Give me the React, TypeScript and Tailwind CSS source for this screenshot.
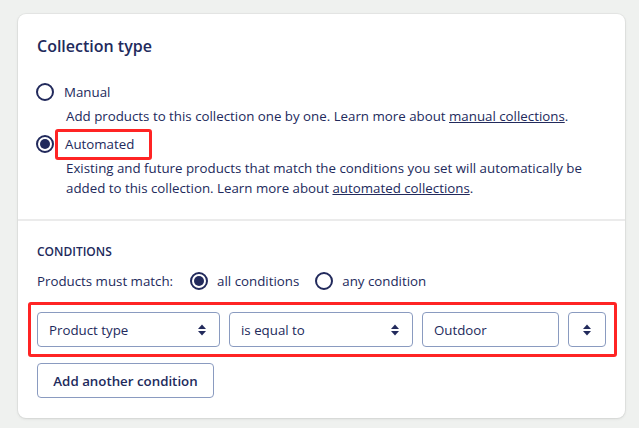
import React from "react";

const ink = "text-[#222a5c]";

// Radio button circle, filled when checked
const Radio = ({ checked }: { checked?: boolean }) => (
  <span className="w-[18px] h-[18px] rounded-full border-2 border-[#222a5c] bg-white flex items-center justify-center shrink-0">
    {checked && <span className="w-[10px] h-[10px] rounded-full bg-[#222a5c]" />}
  </span>
);

// Up/down carets of a select
const Carets = () => (
  <svg width="10" height="14" viewBox="0 0 10 14" className="shrink-0">
    <path d="M5 1.5 L9 6 H1 Z" fill="#222a5c" />
    <path d="M5 12.5 L1 8 H9 Z" fill="#222a5c" />
  </svg>
);

const Select = ({ label, width }: { label?: string; width: string }) => (
  <div
    className={`${width} h-[35px] rounded-[4px] border border-[#8a9bc0] bg-white flex items-center justify-between pl-[11px] pr-[12px] shrink-0`}
  >
    <span>{label}</span>
    <Carets />
  </div>
);

export default function App() {
  return (
    <div
      className={`w-[639px] h-[428px] bg-[#eff1ef] pt-[14px] pl-[18px] ${ink} text-[13.3px] leading-[20px]`}
      style={{ fontFamily: '"Open Sans", "Noto Sans", sans-serif' }}
    >
      <div className="w-[607px] h-[404px] bg-white rounded-[8px] shadow-[0_0_0_1px_rgba(63,63,68,0.05),0_1px_3px_0_rgba(63,63,68,0.12)] overflow-hidden">
        {/* Collection type */}
        <section className="px-[19px] pt-[22px] h-[207px] border-b-2 border-[#ebebeb]">
          <h2 className="text-[16px] font-semibold leading-[20px]">Collection type</h2>
          <div className="mt-[26px] flex items-center gap-[10px] h-[20px] -ml-[1px]">
            <Radio />
            <span>Manual</span>
          </div>
          <p className="ml-[29px] mt-[4px]">
            Add products to this collection one by one. Learn more about{" "}
            <span className="underline">manual collections</span>.
          </p>
          <div className="mt-[8px] flex items-center h-[20px] -ml-[1px]">
            <Radio checked />
            <span className="ml-[1px] border-[3px] border-[#ff2424] rounded-[3px] h-[31px] flex items-center pl-[7px] pr-[15px]">
              Automated
            </span>
          </div>
          <p className="ml-[29px] mt-[4px] w-[540px]">
            Existing and future products that match the conditions you set will automatically be
            added to this collection. Learn more about{" "}
            <span className="underline">automated collections</span>.
          </p>
        </section>

        {/* Conditions */}
        <section className="px-[19px] pt-[23px]">
          <h3 className="text-[12px] font-semibold leading-[16px] uppercase">Conditions</h3>
          <div className="mt-[11px] flex items-center h-[20px]">
            <span>Products must match:</span>
            <span className="ml-[17px] flex items-center gap-[9px]">
              <Radio checked />
              all conditions
            </span>
            <span className="ml-[16px] flex items-center gap-[9px]">
              <Radio />
              any condition
            </span>
          </div>
          <div className="mt-[11px] -ml-[9px] -mr-[11px] border-[3px] border-[#ff2424] rounded-[3px] pl-[6px] pr-[8px] py-[7px] flex gap-[9px]">
            <Select label="Product type" width="w-[183px]" />
            <Select label="is equal to" width="w-[184px]" />
            <div className="w-[141px] h-[35px] rounded-[4px] border border-[#8a9bc0] bg-white flex items-center pl-[11px]">
              Outdoor
            </div>
            <div className="w-[38px] h-[35px] rounded-[4px] border border-[#8a9bc0] bg-white flex items-center justify-center shrink-0">
              <Carets />
            </div>
          </div>
          <button className="mt-[6px] h-[35px] w-[177px] rounded-[4px] border border-[#8a9bc0] bg-white font-semibold">
            Add another condition
          </button>
        </section>
      </div>
    </div>
  );
}
